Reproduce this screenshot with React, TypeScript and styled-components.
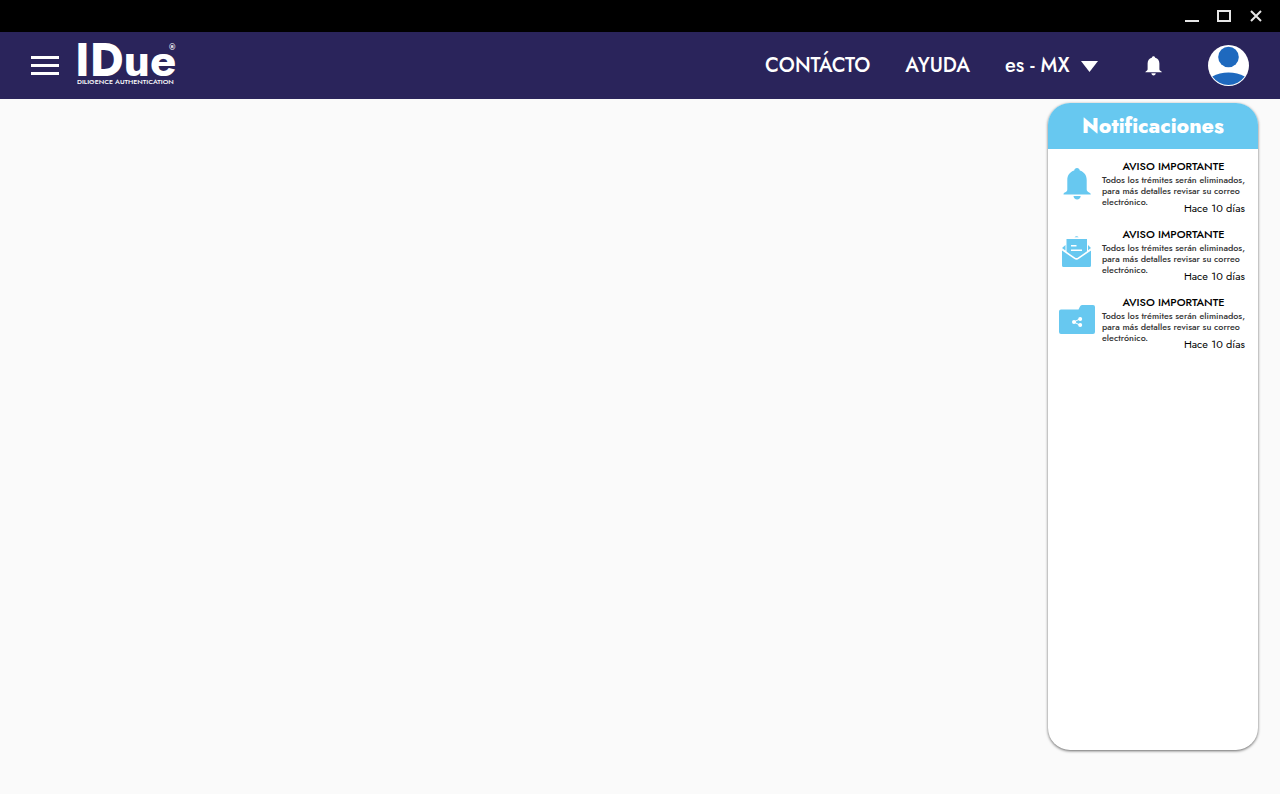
import React from "react";
import styled, { createGlobalStyle } from "styled-components";

const sky = "#67c8f0";
const navy = "#2a245b";

const GlobalStyle = createGlobalStyle`
  * { box-sizing: border-box; }
  body {
    margin: 0;
    background: #fafafa;
    color: #000;
    font-family: Jost, Futura, Lato, "Liberation Sans", sans-serif;
    font-weight: 500;
  }
  svg { display: block; }
  h1, h2, h3, p, ul { margin: 0; padding: 0; }
`;

const Page = styled.div`
  display: flex;
  flex-direction: column;
  min-height: 100vh;
`;

const TitleBar = styled.div`
  display: flex;
  justify-content: flex-end;
  height: 32px;
  padding-right: 8px;
  background: #000;
`;

const IconButton = styled.button<{ $size: number }>`
  display: flex;
  align-items: center;
  justify-content: center;
  width: ${(p) => p.$size}px;
  height: ${(p) => p.$size}px;
  padding: 0;
  border: 0;
  background: transparent;
  color: inherit;
  cursor: pointer;
`;

const Header = styled.header`
  display: flex;
  align-items: center;
  height: 67px;
  padding: 0 31px 0 30px;
  background: ${navy};
  color: #fff;
`;

const Logo = styled.a`
  display: block;
  margin-left: 16px;

  svg { overflow: visible; }
`;

const Nav = styled.nav`
  display: flex;
  align-items: center;
  gap: 35px;
  margin-left: auto;
`;

const NavLink = styled.a`
  color: #fff;
  font-size: 20px;
  line-height: 28px;
  text-decoration: none;
`;

const Language = styled.label`
  display: grid;
  grid-template-columns: 1fr;
  align-items: center;
  width: 93px;

  & > * { grid-area: 1 / 1; }
  & > svg { justify-self: end; margin-top: 2px; pointer-events: none; }
`;

const LanguageSelect = styled.select`
  appearance: none;
  width: 100%;
  padding: 0;
  border: 0;
  background: transparent;
  color: #fff;
  font-family: inherit;
  font-size: 20px;
  font-weight: inherit;
  line-height: 28px;

  option { color: #000; }
`;

const Account = styled.div`
  display: flex;
  align-items: center;
  gap: 40px;
  margin-left: 40px;
`;

const Main = styled.main`
  display: flex;
  flex: 1;
  justify-content: flex-end;
  padding: 4px 22px 44px;
`;

const Panel = styled.section`
  width: 210px;
  border-radius: 22px;
  overflow: hidden;
  background: #fff;
  box-shadow: 0 1px 3px rgba(0, 0, 0, 0.6);
`;

const PanelTitle = styled.h2`
  background: ${sky};
  color: #fff;
  font-size: 21px;
  font-weight: 800;
  line-height: 46px;
  text-align: center;
`;

const NoticeList = styled.ul`
  display: flex;
  flex-direction: column;
  gap: 13px;
  padding: 10px 0;
  list-style: none;
`;

const Notice = styled.li`
  display: grid;
  grid-template-columns: 50px 1fr;
  padding: 0 14px 0 4px;
`;

const NoticeIcon = styled.div`
  display: flex;
  align-items: center;
  justify-content: center;
  height: 50px;
  color: ${sky};
`;

const NoticeTitle = styled.h3`
  font-size: 11px;
  font-weight: 500;
  line-height: 15px;
  text-align: center;
`;

const NoticeText = styled.p`
  color: #333;
  font-size: 9px;
  line-height: 11px;
  white-space: pre;
`;

const NoticeTime = styled.time`
  display: block;
  margin-top: -4px;
  font-size: 11px;
  font-weight: 400;
  line-height: 11px;
  text-align: right;
`;

const BellIcon = ({ width, height }: { width: number; height: number }) => (
  <svg width={width} height={height} viewBox="0 0 28 32" fill="currentColor" aria-hidden="true">
    <path d="M14 0c1.500 0 2.600 1 2.800 2.600C21.300 4 23.700 7.400 23.700 12v9.500c0 1.500 1 2.400 2.800 3.200.8.4 1.300.9 1.300 1.700H.5c0-.9.500-1.400 1.300-1.800 1.700-.8 2.500-1.700 2.500-3.100V12c0-4.600 2.400-8 6.900-9.400C11.400 1 12.500 0 14 0z" />
    <path d="M10.500 28h7.200c-.2 2.200-1.600 3.600-3.600 3.600S10.700 30.200 10.500 28z" />
  </svg>
);

const MailIcon = () => (
  <svg width="30" height="32" viewBox="0 0 30 32" fill="currentColor" aria-hidden="true">
    <path d="M12.500 1.300c1-1.300 3.200-1.300 4.200 0z" />
    <path d="M4.500 3h20.500v13.500L15 24 4.500 16.500z" />
    <path d="M0 13l15 10.500L29 13v16.500a1.500 1.500 0 0 1-1.500 1.500h-26A1.500 1.500 0 0 1 0 29.500z" />
    <path d="M0 13.500l12.500 8.700q2 1.400 4 0L29 13.500" fill="none" stroke="#fff" strokeWidth="1.600" />
    <path d="M0 12l3.500-3v5.500zM29 12l-3-3v5.200z" />
    <path d="M9 9.800h5.500M9 14.200h11" stroke="#fff" strokeWidth="1.600" />
  </svg>
);

const FolderIcon = () => (
  <svg width="36" height="30" viewBox="0 0 36 30" aria-hidden="true">
    <path fill="currentColor" d="M2 4.500h17.500l1.500-3A2.500 2.500 0 0 1 23 0h11a2 2 0 0 1 2 2v25a2 2 0 0 1-2 2H2a2 2 0 0 1-2-2V6.500a2 2 0 0 1 2-2z" />
    <path d="M21 13.800L15 17l6 3.200" fill="none" stroke="#fff" strokeWidth="1" />
    <g fill="#fff">
      <circle cx="15" cy="17" r="2" />
      <circle cx="21.200" cy="14" r="2" />
      <circle cx="21.200" cy="20" r="2" />
    </g>
  </svg>
);

const notices = [
  { id: 1, icon: <BellIcon width={28} height={32} /> },
  { id: 2, icon: <MailIcon /> },
  { id: 3, icon: <FolderIcon /> },
];

export default function App() {
  return (
    <Page>
      <GlobalStyle />
      <TitleBar>
        <IconButton $size={32} aria-label="Minimizar">
          <svg width="14" height="14" viewBox="0 0 14 14"><path d="M0 11h14v2H0z" fill="#e6e6e6" /></svg>
        </IconButton>
        <IconButton $size={32} aria-label="Maximizar">
          <svg width="14" height="12" viewBox="0 0 14 12"><path d="M1 1h12v10H1z" fill="none" stroke="#e6e6e6" strokeWidth="2" /></svg>
        </IconButton>
        <IconButton $size={32} aria-label="Cerrar">
          <svg width="12" height="12" viewBox="0 0 12 12"><path d="M1 1l10 10M11 1L1 11" stroke="#e6e6e6" strokeWidth="2" /></svg>
        </IconButton>
      </TitleBar>
      <Header>
        <IconButton $size={30} aria-label="Menú">
          <svg width="28" height="19" viewBox="0 0 28 19" fill="#fff">
            <path d="M0 0h28v3H0zM0 8h28v3H0zM0 16h28v3H0z" />
          </svg>
        </IconButton>
        <Logo href="#" aria-label="IDue">
          <svg width="110" height="49" viewBox="0 0 110 49" fill="#fff">
            <text x="-1" y="35" fontSize="46" fontWeight="700">IDue</text>
            <text x="1" y="43" fontSize="7" fontWeight="500">DILIGENCE AUTHENTICATION</text>
            <text x="93" y="9" fontSize="8" fontWeight="700">®</text>
          </svg>
        </Logo>
        <Nav>
          <NavLink href="#">CONTÁCTO</NavLink>
          <NavLink href="#">AYUDA</NavLink>
          <Language>
            <LanguageSelect aria-label="Idioma" defaultValue="es-MX">
              <option value="es-MX">es - MX</option>
            </LanguageSelect>
            <svg width="17" height="11" viewBox="0 0 17 11" fill="#fff"><path d="M0 0h17L8.500 11z" /></svg>
          </Language>
        </Nav>
        <Account>
          <IconButton $size={30} aria-label="Notificaciones">
            <BellIcon width={17} height={20} />
          </IconButton>
          <IconButton $size={41} aria-label="Cuenta">
            <svg width="41" height="41" viewBox="0 0 41 41">
              <circle cx="20.500" cy="20.500" r="20.500" fill="#fff" />
              <circle cx="20.500" cy="12" r="10.300" fill="#1e69be" />
              <path d="M4.300 31.500C13.500 26.300 27.500 26.300 36.700 31.500A19.800 19.800 0 0 1 4.300 31.500z" fill="#1e69be" />
            </svg>
          </IconButton>
        </Account>
      </Header>
      <Main>
        <Panel>
          <PanelTitle>Notificaciones</PanelTitle>
          <NoticeList>
            {notices.map((n) => (
              <Notice key={n.id}>
                <NoticeIcon>{n.icon}</NoticeIcon>
                <div>
                  <NoticeTitle>AVISO IMPORTANTE</NoticeTitle>
                  <NoticeText>
                    {"Todos los trémites serán eliminados,\npara más detalles revisar su correo\nelectrónico."}
                  </NoticeText>
                  <NoticeTime>Hace 10 días</NoticeTime>
                </div>
              </Notice>
            ))}
          </NoticeList>
        </Panel>
      </Main>
    </Page>
  );
}
